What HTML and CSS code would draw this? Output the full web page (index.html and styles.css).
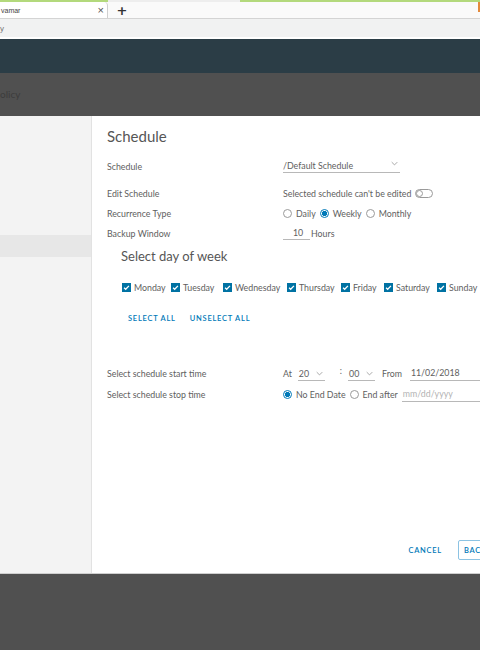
FILE: index.html
```html
<!DOCTYPE html>
<html>
<head>
<meta charset="utf-8">
<link rel="stylesheet" href="styles.css">
</head>
<body>
<div class="chrome">
  <div class="accent"><span class="acc-a"></span><span class="acc-b"></span><span class="acc-c"></span></div>
  <div class="tabs">
    <div class="tab"><span class="tab-title">vamar</span><span class="tab-x">×</span></div>
    <div class="newtab">+</div>
    <div class="tab-orange"></div>
  </div>
  <div class="address"><span class="addr-text">y</span></div>
  <div class="gap"></div>
</div>
<div class="app-header"></div>
<div class="page-title"><span>olicy</span></div>
<div class="modal">
  <div class="nav">
    <div class="nav-item selected"></div>
  </div>
  <div class="content">
    <h2 class="title">Schedule</h2>
    <div class="row first">
      <div class="label">Schedule</div>
      <div class="field">
        <div class="select wide"><span>/Default Schedule</span><svg class="chev" viewBox="0 0 10 6" width="7" height="5"><path d="M1 1l4 4 4-4" fill="none" stroke="#9a9a9a" stroke-width="1.2"/></svg></div>
      </div>
    </div>
    <div class="row">
      <div class="label">Edit Schedule</div>
      <div class="field"><span>Selected schedule can't be edited</span><span class="toggle"><span class="knob"></span></span></div>
    </div>
    <div class="row">
      <div class="label">Recurrence Type</div>
      <div class="field">
        <span class="radio"></span><span class="opt">Daily</span>
        <span class="radio on"></span><span class="opt">Weekly</span>
        <span class="radio"></span><span class="opt">Monthly</span>
      </div>
    </div>
    <div class="row">
      <div class="label">Backup Window</div>
      <div class="field"><span class="num">10</span><span>Hours</span></div>
    </div>
    <h3 class="subtitle">Select day of week</h3>
    <div class="days">
      <span class="cb"><svg viewBox="0 0 10 10" width="9" height="9"><path d="M2.3 5.2l1.8 1.8 3.6-3.8" fill="none" stroke="#fff" stroke-width="1.4"/></svg></span><span class="day d-mon">Monday</span>
      <span class="cb"><svg viewBox="0 0 10 10" width="9" height="9"><path d="M2.3 5.2l1.8 1.8 3.6-3.8" fill="none" stroke="#fff" stroke-width="1.4"/></svg></span><span class="day d-tue">Tuesday</span>
      <span class="cb"><svg viewBox="0 0 10 10" width="9" height="9"><path d="M2.3 5.2l1.8 1.8 3.6-3.8" fill="none" stroke="#fff" stroke-width="1.4"/></svg></span><span class="day d-wed">Wednesday</span>
      <span class="cb"><svg viewBox="0 0 10 10" width="9" height="9"><path d="M2.3 5.2l1.8 1.8 3.6-3.8" fill="none" stroke="#fff" stroke-width="1.4"/></svg></span><span class="day d-thu">Thursday</span>
      <span class="cb"><svg viewBox="0 0 10 10" width="9" height="9"><path d="M2.3 5.2l1.8 1.8 3.6-3.8" fill="none" stroke="#fff" stroke-width="1.4"/></svg></span><span class="day d-fri">Friday</span>
      <span class="cb"><svg viewBox="0 0 10 10" width="9" height="9"><path d="M2.3 5.2l1.8 1.8 3.6-3.8" fill="none" stroke="#fff" stroke-width="1.4"/></svg></span><span class="day d-sat">Saturday</span>
      <span class="cb"><svg viewBox="0 0 10 10" width="9" height="9"><path d="M2.3 5.2l1.8 1.8 3.6-3.8" fill="none" stroke="#fff" stroke-width="1.4"/></svg></span><span class="day">Sunday</span>
    </div>
    <div class="links"><span class="link">SELECT ALL</span><span class="link">UNSELECT ALL</span></div>
    <div class="row start">
      <div class="label">Select schedule start time</div>
      <div class="field">
        <span class="opt at">At</span>
        <div class="select small"><span>20</span><svg class="chev" viewBox="0 0 10 6" width="7" height="5"><path d="M1 1l4 4 4-4" fill="none" stroke="#9a9a9a" stroke-width="1.2"/></svg></div>
        <span class="colon">:</span>
        <div class="select small"><span>00</span><svg class="chev" viewBox="0 0 10 6" width="7" height="5"><path d="M1 1l4 4 4-4" fill="none" stroke="#9a9a9a" stroke-width="1.2"/></svg></div>
        <span class="opt from">From</span>
        <div class="date"><span>11/02/2018</span></div>
      </div>
    </div>
    <div class="row stop">
      <div class="label">Select schedule stop time</div>
      <div class="field">
        <span class="radio on"></span><span class="opt">No End Date</span>
        <span class="radio"></span><span class="opt">End after</span>
        <div class="date ph"><span>mm/dd/yyyy</span></div>
      </div>
    </div>
    <div class="footer">
      <span class="link cancel">CANCEL</span>
      <span class="btn">BACK</span>
    </div>
  </div>
</div>
</body>
</html>
```
FILE: styles.css
```css
* { box-sizing: border-box; }
html, body { margin: 0; padding: 0; }
body {
  width: 480px; height: 650px; overflow: hidden;
  background: #505050;
  font-family: "Lato", "Open Sans", sans-serif;
  color: #5e5e5e;
}
.chrome { background: #fafafa; }
.accent { display: flex; height: 2px; }
.acc-a { width: 108px; background: #b3d97c; }
.acc-b { width: 132px; background: #eeeeee; }
.acc-c { flex: 1; background: #b3d97c; }
.tabs { display: flex; height: 17px; border-bottom: 1px solid #d4d4d4; align-items: stretch; }
.tab { width: 108px; background: #fff; border-right: 1px solid #d0d0d0; border-radius: 0 4px 0 0; display: flex; align-items: center; justify-content: space-between; padding: 0 3px 0 1px; font-size: 7px; color: #444; font-family: "Liberation Sans", sans-serif; }
.tab-x { font-size: 11px; color: #555; }
.newtab { width: 28px; display: flex; align-items: center; justify-content: center; font-size: 13px; font-weight: bold; color: #333; font-family: "DejaVu Sans", sans-serif; }
.tab-orange { margin-left: auto; width: 2px; height: 10px; background: #e48a3c; }
.address { height: 18px; background: #f1f2f2; display: flex; align-items: center; font-size: 8px; color: #777; font-family: "Liberation Sans", sans-serif; }
.gap { height: 2px; background: #ffffff; }
.app-header { height: 34px; background: #2b3d46; }
.page-title { height: 43px; display: flex; align-items: center; font-size: 10px; color: #3c3c3c; padding-bottom: 2px; }
.modal { display: flex; height: 458px; background: #fff; border-bottom: 1px solid #cfcfcf; }
.nav { width: 92px; background: #f3f3f3; border-right: 1px solid #e2e2e2; padding-top: 119px; flex-shrink: 0; }
.nav-item { height: 22px; }
.nav-item.selected { background: #e7e7e7; }
.content { flex: 1; display: flex; flex-direction: column; padding-left: 15px; font-size: 8.8px; min-width: 0; white-space: nowrap; }
.title { margin: 10px 0 10px; font-weight: 400; font-size: 15px; line-height: 20px; color: #565656; }
.row { display: flex; align-items: center; height: 20px; }
.row.first { margin-bottom: 7px; }
.label { width: 176px; flex-shrink: 0; }
.field { display: flex; align-items: center; flex-shrink: 0; }
.select { display: flex; align-items: center; justify-content: space-between; border-bottom: 1px solid #b8b8b8; height: 14px; }
.select.wide { width: 117px; }
.select.wide .chev { margin-right: 2px; margin-top: -5px; }
.select.small { width: 27px; padding-left: 1px; padding-right: 2px; }
.toggle { display: inline-block; width: 18px; height: 9px; border: 1px solid #9a9a9a; border-radius: 5px; margin-left: 4px; position: relative; }
.knob { position: absolute; left: 0; top: 0; width: 7px; height: 7px; border-radius: 50%; border: 1px solid #9a9a9a; background: #fff; }
.radio { width: 9px; height: 9px; border-radius: 50%; border: 1px solid #9a9a9a; display: inline-block; flex-shrink: 0; }
.radio.on { border: 1px solid #0079b8; background: radial-gradient(circle, #0079b8 0 2.4px, #fff 2.9px); }
.opt { margin: 0 4px 0 4px; flex-shrink: 0; }
.num { width: 27px; text-align: center; border-bottom: 1px solid #b8b8b8; height: 14px; line-height: 14px; margin-right: 1px; padding-left: 3px; }
.subtitle { margin: 3px 0 0 14px; font-weight: 400; font-size: 13px; line-height: 20px; color: #565656; }
.days { display: flex; align-items: center; height: 20px; margin: 11px 0 0 15px; }
.cb { width: 9px; height: 9px; background: #0072a3; display: inline-flex; flex-shrink: 0; }
.day { margin: 0 0 0 3px; }
.d-mon { width: 37px; }
.d-tue { width: 40px; }
.d-wed { width: 52px; }
.d-thu { width: 42px; }
.d-fri { width: 31px; }
.d-sat { width: 41px; }
.links { display: flex; align-items: center; height: 20px; margin: 11px 0 0 21px; gap: 14px; }
.link { color: #0079b8; font-size: 7.5px; letter-spacing: 0.75px; font-weight: 600; }
.row.start { margin-top: 35px; height: 21px; }
.row.stop { height: 21px; }
.at { margin-left: 0; margin-right: 6px; }
.colon { margin: -6px 6px 0 15px; }
.from { margin-left: 7px; margin-right: 8px; }
.date { border-bottom: 1px solid #b8b8b8; height: 14px; width: 80px; padding-left: 1px; flex-shrink: 0; }
.date.ph { color: #b3b3b3; }
.footer { margin-top: auto; margin-bottom: 13px; display: flex; align-items: center; justify-content: flex-end; gap: 16px; height: 20px; margin-right: -40px; }
.btn { border: 1px solid #8cc3e3; border-radius: 2px; color: #0079b8; font-size: 7.5px; letter-spacing: 0.75px; font-weight: 600; padding: 0 0 0 5px; height: 20px; display: flex; align-items: center; width: 62px; flex-shrink: 0; }
```
